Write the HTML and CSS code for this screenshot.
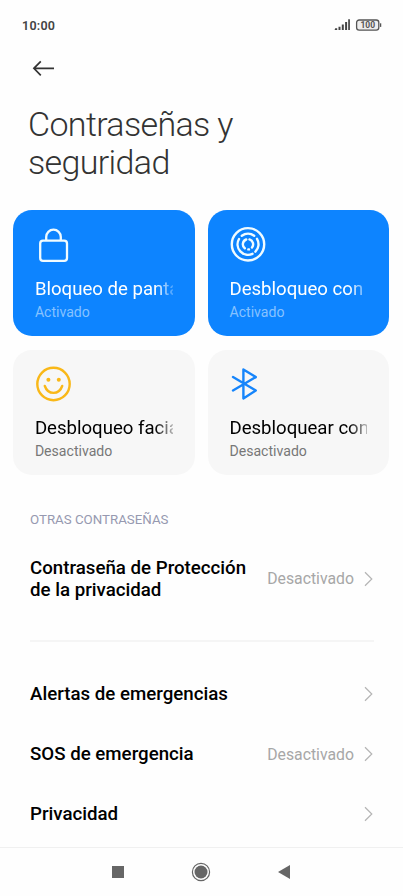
FILE: index.html
```html
<!DOCTYPE html>
<html lang="es">
<head>
<meta charset="utf-8">
<title>Contraseñas y seguridad</title>
<link rel="stylesheet" href="styles.css">
</head>
<body>
<div class="screen">
  <header class="status">
    <span class="time">10:00</span>
    <svg class="status-icons" width="50" height="16" viewBox="0 0 50 16">
      <path fill="#444" d="M1.2 11.3h2V13H.6zM4.5 9.8h2V13h-2zM7.8 7.6h2V13h-2zM11.1 5h2v8h-2zM14.2 2.2h1.7V13h-1.7z"/>
      <rect x="22.6" y="3" width="22.2" height="10.2" rx="2.6" fill="#eee" stroke="#555" stroke-width="1.3"/>
      <path d="M46.6 6.3v3.6" stroke="#555" stroke-width="1.3"/>
      <text class="battery" x="33.8" y="11.1" text-anchor="middle">100</text>
    </svg>
  </header>
  <nav class="toolbar">
    <svg width="24" height="18" viewBox="0 0 24 18"><path d="M22 9.3H2M8.8 2.3L1.9 9.3l6.9 7" fill="none" stroke="#333" stroke-width="1.7"/></svg>
  </nav>
  <h1>Contraseñas y<br>seguridad</h1>
  <section class="cards">
    <article class="card on">
      <svg width="38" height="38" viewBox="0 0 38 38" fill="none" stroke="#f0fbff" stroke-width="2.3"><rect x="5.2" y="14.6" width="26.8" height="20.2" rx="2.8"/><path d="M11.2 14.5V11a7.3 7.3 0 0 1 14.6 0v3.5"/></svg>
      <h2>Bloqueo de panta</h2>
      <p>Activado</p>
    </article>
    <article class="card on">
      <svg width="38" height="38" viewBox="0 0 38 38" fill="none" stroke="#f0fbff" stroke-width="2.4"><circle cx="19" cy="18.3" r="16.2"/><path stroke-linecap="round" d="M12.8 9.8A10.5 10.5 0 0 1 25.2 9.8M28 12.8A10.5 10.5 0 0 1 26.4 25.7M23.5 27.8A10.5 10.5 0 0 1 10 13M17.2 13.5A5.1 5.1 0 0 0 15.8 22.3M20.5 13.4A5.1 5.1 0 0 1 23 21.5M19.3 23.4H20"/></svg>
      <h2>Desbloqueo con</h2>
      <p>Activado</p>
    </article>
    <article class="card">
      <svg width="38" height="38" viewBox="0 0 38 38" fill="none" stroke="#f9b818" stroke-width="2.4" stroke-linecap="round"><circle cx="18.5" cy="18" r="16.2"/><path d="M9.8 20c3.2 9.2 14.2 9.2 17.4 0"/><g fill="#f9b818" stroke="none"><circle cx="13.4" cy="13.7" r="2"/><circle cx="23.8" cy="13.7" r="2"/></g></svg>
      <h2>Desbloqueo facia</h2>
      <p>Desactivado</p>
    </article>
    <article class="card">
      <svg width="38" height="38" viewBox="0 0 38 38" fill="none" stroke="#1685fb" stroke-width="2.4" stroke-linecap="round" stroke-linejoin="round"><path d="M4 11l22.8 13.5-12.4 7.9V3.5l12.4 7.6L4 24.5"/></svg>
      <h2>Desbloquear con</h2>
      <p>Desactivado</p>
    </article>
  </section>
  <h3>OTRAS CONTRASEÑAS</h3>
  <section class="row tall"><b>Contraseña de Protección<br>de la privacidad</b><span>Desactivado</span><svg width="10" height="16" viewBox="0 0 10 16"><path d="M1 1.3L7.8 8 1 14.7"/></svg></section>
  <hr>
  <section class="row"><b>Alertas de emergencias</b><svg width="10" height="16" viewBox="0 0 10 16"><path d="M1 1.3L7.8 8 1 14.7"/></svg></section>
  <section class="row"><b>SOS de emergencia</b><span>Desactivado</span><svg width="10" height="16" viewBox="0 0 10 16"><path d="M1 1.3L7.8 8 1 14.7"/></svg></section>
  <section class="row"><b>Privacidad</b><svg width="10" height="16" viewBox="0 0 10 16"><path d="M1 1.3L7.8 8 1 14.7"/></svg></section>
  <footer class="navbar">
    <svg width="12" height="20" viewBox="0 0 12 20"><path fill="#666" d="M0 4h12v12H0z"/></svg>
    <svg width="20" height="20" viewBox="0 0 20 20"><circle cx="10" cy="10" r="8.6" fill="none" stroke="#666" stroke-width="1.2"/><circle cx="10" cy="10" r="6.5" fill="#666"/></svg>
    <svg width="12" height="20" viewBox="0 0 12 20"><path fill="#666" d="M12 3v14L0 10z"/></svg>
  </footer>
</div>
</body>
</html>
```
FILE: styles.css
```css
* { box-sizing: border-box; margin: 0; }
body { background: #fefefe; font-family: Roboto, sans-serif; color: #000; }
svg { display: block; flex: none; }
.screen { width: 403px; height: 896px; overflow: hidden; display: flex; flex-direction: column; }
.status { height: 50px; padding: 0 19px 0 22px; display: flex; align-items: center; justify-content: space-between; }
.time { font-size: 12.5px; font-weight: 600; color: #444; letter-spacing: .25px; }
.status-icons { margin-bottom: 1px; }
.battery { font-size: 8.5px; font-weight: 700; fill: #555; }
.toolbar { height: 37px; padding: 9px 0 0 32px; }
h1 { margin: 17.5px 0 0 28px; height: 105.5px; font-size: 34px; line-height: 38.5px; font-weight: 300; letter-spacing: -.65px; color: #333; }
.cards { display: grid; grid-template-columns: 181.7px 181.7px; grid-template-rows: 126px 125.3px; gap: 13.7px 12.9px; padding-left: 13.2px; }
.card { border-radius: 19px; background: #f7f7f7; padding: 16px 15px 0 21.7px; }
.card h2 { width: 144px; margin-top: 13px; font-size: 18.6px; line-height: 22px; font-weight: 400; white-space: nowrap; -webkit-mask-image: linear-gradient(90deg, #000 120px, rgba(0, 0, 0, .25) 138px, transparent 138.5px); }
.card p { margin-top: 3px; font-size: 14.1px; line-height: 18px; color: #777; }
.card.on h2 { margin-top: 13.6px; }
.card.on p { color: #86c2ff; }
.on { background: #0d84ff; color: #fff; }
h3 { margin: 36.2px 0 0 30px; font-size: 13.3px; line-height: 18px; font-weight: 400; color: #9699b0; }
.row { height: 59.7px; padding: 0 29px 0 30px; display: flex; align-items: center; flex: none; }
.row b { flex: 1; font-size: 18.7px; line-height: 22px; font-weight: 500; white-space: nowrap; }
.row span { font-size: 15.8px; color: #a7a7a7; margin-right: 10px; }
.row svg { fill: none; stroke: #b5b5b5; stroke-width: 1.2; }
.tall { height: 99.6px; }
hr { flex: none; width: 344px; height: 2px; border: 0; margin: 11px 0 22.8px 30px; background: #f5f5f5; }
.navbar { margin-top: auto; flex: none; height: 49px; border-top: 1px solid #f0f0f0; display: flex; align-items: center; padding-left: 112px; gap: 67px; }
```
